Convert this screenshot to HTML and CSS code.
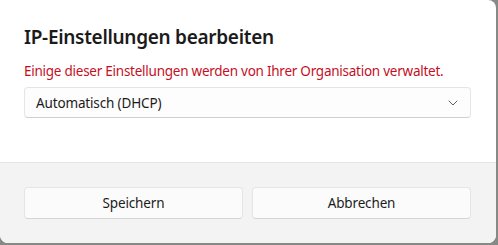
FILE: index.html
```html
<!DOCTYPE html>
<html lang="de">
<head>
<meta charset="utf-8">
<title>IP-Einstellungen bearbeiten</title>
<link rel="stylesheet" href="styles.css">
</head>
<body>
<div class="dialog">
  <div class="content">
    <h1 class="title">IP-Einstellungen bearbeiten</h1>
    <p class="notice">Einige dieser Einstellungen werden von Ihrer Organisation verwaltet.</p>
    <div class="combo">
      <span class="combo-text">Automatisch (DHCP)</span>
      <svg class="chevron" width="10" height="6" viewBox="0 0 10 6"><path d="M1 1 L5 5 L9 1" fill="none" stroke="#606060" stroke-width="1" stroke-linecap="round" stroke-linejoin="round"/></svg>
    </div>
  </div>
  <div class="footer">
    <button class="btn">Speichern</button>
    <button class="btn">Abbrechen</button>
  </div>
</div>
</body>
</html>
```
FILE: styles.css
```css
html, body {
  margin: 0;
  padding: 0;
  width: 498px;
  height: 245px;
  overflow: hidden;
  background: #858a87;
  font-family: "Noto Sans", "Open Sans", sans-serif;
}
.dialog {
  width: 496px;
  height: 243px;
  background: #ffffff;
  border-radius: 0 8px 8px 8px;
  overflow: hidden;
  display: flex;
  flex-direction: column;
  box-sizing: border-box;
}
.content {
  flex: 1;
  padding: 23px 25px 0 24px;
  display: flex;
  flex-direction: column;
}
.title {
  margin: 0;
  font-size: 19px;
  line-height: 28px;
  font-weight: 600;
  letter-spacing: -0.3px;
  color: #1b1b1b;
}
.notice {
  margin: 10px 0 0 0;
  font-size: 13.5px;
  line-height: 20px;
  letter-spacing: -0.25px;
  color: #c50f1f;
}
.combo {
  margin-top: 6px;
  height: 31px;
  box-sizing: border-box;
  border: 1px solid #e5e5e5;
  border-bottom-color: #d0d0d0;
  border-radius: 4px;
  background: #fdfdfd;
  display: flex;
  align-items: center;
  justify-content: space-between;
  padding: 0 12px 0 11px;
}
.combo-text {
  font-size: 13.5px;
  letter-spacing: -0.15px;
  color: #1b1b1b;
}
.chevron {
  display: block;
}
.footer {
  height: 81px;
  box-sizing: border-box;
  background: #f3f3f3;
  border-top: 1px solid #e5e5e5;
  padding: 24px 25px 0 24px;
  display: flex;
  gap: 9px;
}
.btn {
  flex: 1;
  height: 32px;
  box-sizing: border-box;
  border: 1px solid #e5e5e5;
  border-bottom-color: #d6d6d6;
  border-radius: 4px;
  background: #fbfbfb;
  font-family: inherit;
  font-size: 13.5px;
  letter-spacing: -0.15px;
  color: #1b1b1b;
  padding: 0;
}
```
